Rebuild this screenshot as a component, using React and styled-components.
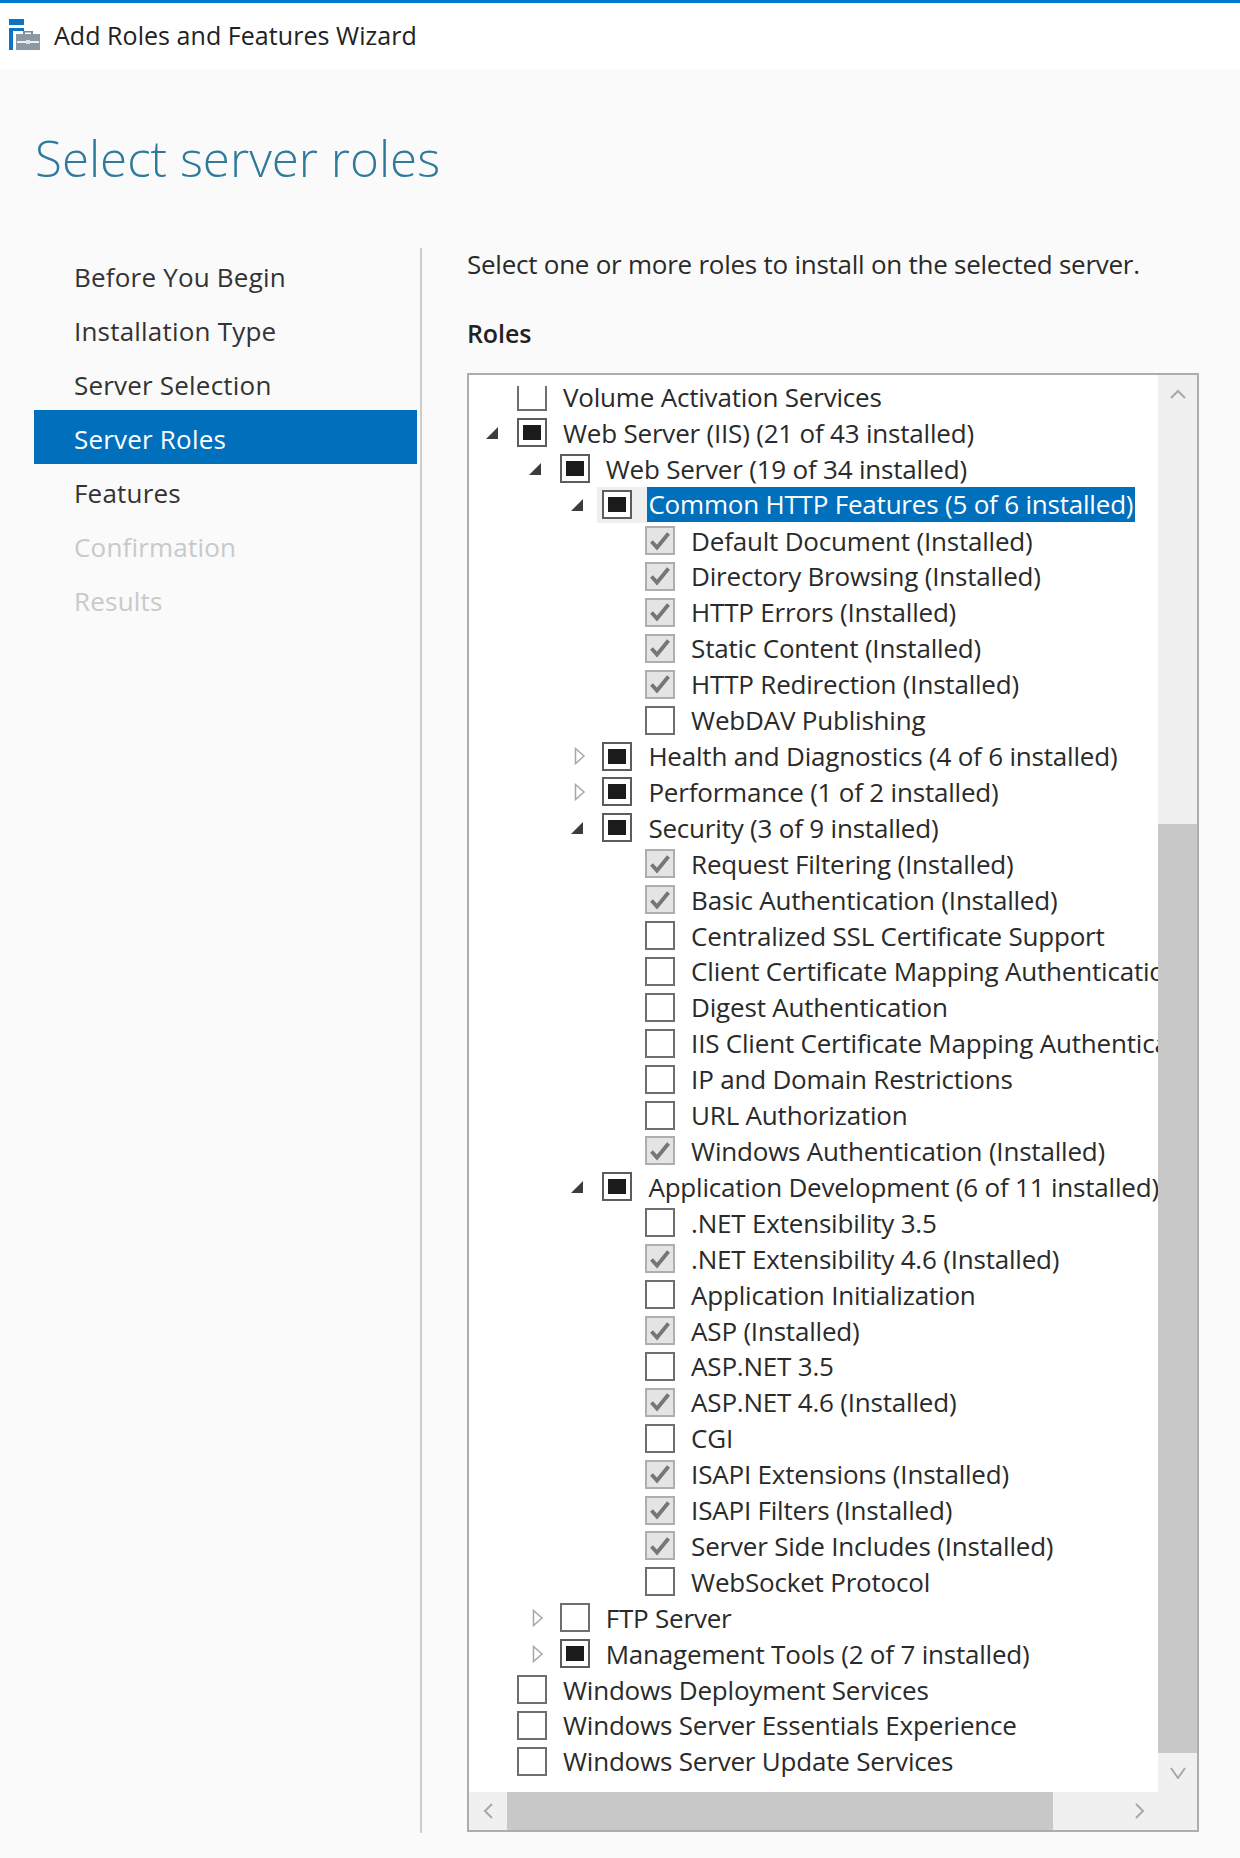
import React from 'react';
import styled, { createGlobalStyle } from 'styled-components';

const GlobalStyle = createGlobalStyle`
  html, body {
    margin: 0;
    padding: 0;
    background: #fafafa;
  }
  body {
    font-family: "Open Sans", "Noto Sans", sans-serif;
  }
`;

const Page = styled.div`
  width: 1240px;
  height: 1858px;
  overflow: hidden;
  display: flex;
  flex-direction: column;
  background: #fafafa;
`;

const TitleBar = styled.header`
  height: 70px;
  box-sizing: border-box;
  border-top: 3px solid #0078d0;
  background: #fff;
  padding: 0 0 4px 9px;
  display: flex;
  align-items: center;
  gap: 13px;
`;

const TitleText = styled.span`
  font-size: 25px;
  color: #222;
  letter-spacing: 0.05px;
`;

const Heading = styled.h1`
  margin: 0;
  height: 178px;
  box-sizing: border-box;
  padding: 50px 0 0 35px;
  font-size: 49.3px;
  line-height: 76px;
  font-weight: 300;
  color: #2d7a9c;
`;

const Body = styled.main`
  display: flex;
  padding-left: 34px;
  height: 1585px;
`;

const Nav = styled.nav`
  width: 383px;
  margin-right: 3px;
`;

const NavItem = styled.div`
  height: 54px;
  box-sizing: border-box;
  padding: 4px 0 0 40px;
  display: flex;
  align-items: center;
  font-size: 26px;
  letter-spacing: 0.2px;
  color: ${({ $active, $disabled }) => ($active ? '#fff' : $disabled ? '#c9c9c9' : '#333')};
  background: ${({ $active }) => ($active ? '#0070bd' : 'transparent')};
`;

const Divider = styled.div`
  width: 2px;
  background: #cdcdcd;
`;

const Content = styled.section`
  width: 732px;
  margin-left: 45px;
`;

const Instruction = styled.p`
  margin: -1px 0 1px;
  height: 34px;
  line-height: 34px;
  font-size: 26px;
  letter-spacing: -0.25px;
  color: #2a2a2a;
`;

const SectionLabel = styled.h2`
  margin: 35px 0 23px;
  height: 34px;
  line-height: 34px;
  font-size: 25px;
  font-weight: 600;
  letter-spacing: -0.1px;
  color: #222;
`;

const Panel = styled.div`
  height: 1459px;
  box-sizing: border-box;
  border: 2px solid #adadad;
  background: #fff;
  display: grid;
  grid-template-columns: 1fr 39px;
  grid-template-rows: 1fr 38px;
`;

const Viewport = styled.div`
  margin-top: 11px;
  overflow: hidden;
  min-width: 0;
`;

const Tree = styled.ul`
  list-style: none;
  margin: -7px 0 0;
  padding: 0;
`;

const Row = styled.li`
  height: 35.92px;
  box-sizing: border-box;
  padding-left: ${({ $level }) => 13 + $level * 42.7}px;
  display: flex;
  align-items: center;
  white-space: nowrap;
  font-size: 26px;
  letter-spacing: -0.2px;
  color: #2a2a2a;
`;

const Expander = styled.span`
  width: 35px;
  flex-shrink: 0;
  display: flex;
  align-items: center;
`;

const CheckCell = styled.span`
  height: 36px;
  display: flex;
  align-items: center;
  flex-shrink: 0;
  padding-right: 16px;
  ${({ $hot }) => $hot && 'background: #efefef; margin-left: -5px; padding-left: 5px;'}
`;

const boxColors = {
  empty: { border: '#6e6e6e', fill: '#fff' },
  partial: { border: '#5c5c5c', fill: '#fff' },
  checked: { border: '#aeaeae', fill: '#e4e4e4' },
};

const Box = styled.span`
  width: 30px;
  height: 29px;
  box-sizing: border-box;
  border: 2px solid ${({ $state }) => boxColors[$state].border};
  background: ${({ $state }) => boxColors[$state].fill};
  display: flex;
  align-items: center;
  justify-content: center;
`;

const PartialMark = styled.span`
  width: 18px;
  height: 15px;
  background: #1b1b1b;
`;

const Label = styled.span`
  ${({ $selected }) =>
    $selected &&
    'height: 35px; line-height: 35px; margin-left: -1px; padding: 0 2px 0 1px; background: #0070bd; color: #fff;'}
`;

const VScroll = styled.div`
  background: #f0f0f0;
  display: flex;
  flex-direction: column;
`;

const HScroll = styled.div`
  background: #f0f0f0;
  display: flex;
  min-width: 0;
`;

const Corner = styled.div`
  background: #f0f0f0;
`;

const ScrollButton = styled.div`
  flex: 0 0 ${({ $size }) => $size}px;
  display: flex;
  align-items: center;
  justify-content: center;
`;

const Thumb = styled.div`
  background: #c8c8c8;
  flex: 0 0 ${({ $size }) => $size}px;
`;

const Spacer = styled.div`
  flex: ${({ $size }) => ($size ? `0 0 ${$size}px` : 1)};
`;

const items = [
  [0, 'empty', null, 'Volume Activation Services'],
  [0, 'partial', 'open', 'Web Server (IIS) (21 of 43 installed)'],
  [1, 'partial', 'open', 'Web Server (19 of 34 installed)'],
  [2, 'partial', 'open', 'Common HTTP Features (5 of 6 installed)', true],
  [3, 'checked', null, 'Default Document (Installed)'],
  [3, 'checked', null, 'Directory Browsing (Installed)'],
  [3, 'checked', null, 'HTTP Errors (Installed)'],
  [3, 'checked', null, 'Static Content (Installed)'],
  [3, 'checked', null, 'HTTP Redirection (Installed)'],
  [3, 'empty', null, 'WebDAV Publishing'],
  [2, 'partial', 'closed', 'Health and Diagnostics (4 of 6 installed)'],
  [2, 'partial', 'closed', 'Performance (1 of 2 installed)'],
  [2, 'partial', 'open', 'Security (3 of 9 installed)'],
  [3, 'checked', null, 'Request Filtering (Installed)'],
  [3, 'checked', null, 'Basic Authentication (Installed)'],
  [3, 'empty', null, 'Centralized SSL Certificate Support'],
  [3, 'empty', null, 'Client Certificate Mapping Authentication'],
  [3, 'empty', null, 'Digest Authentication'],
  [3, 'empty', null, 'IIS Client Certificate Mapping Authentication'],
  [3, 'empty', null, 'IP and Domain Restrictions'],
  [3, 'empty', null, 'URL Authorization'],
  [3, 'checked', null, 'Windows Authentication (Installed)'],
  [2, 'partial', 'open', 'Application Development (6 of 11 installed)'],
  [3, 'empty', null, '.NET Extensibility 3.5'],
  [3, 'checked', null, '.NET Extensibility 4.6 (Installed)'],
  [3, 'empty', null, 'Application Initialization'],
  [3, 'checked', null, 'ASP (Installed)'],
  [3, 'empty', null, 'ASP.NET 3.5'],
  [3, 'checked', null, 'ASP.NET 4.6 (Installed)'],
  [3, 'empty', null, 'CGI'],
  [3, 'checked', null, 'ISAPI Extensions (Installed)'],
  [3, 'checked', null, 'ISAPI Filters (Installed)'],
  [3, 'checked', null, 'Server Side Includes (Installed)'],
  [3, 'empty', null, 'WebSocket Protocol'],
  [1, 'empty', 'closed', 'FTP Server'],
  [1, 'partial', 'closed', 'Management Tools (2 of 7 installed)'],
  [0, 'empty', null, 'Windows Deployment Services'],
  [0, 'empty', null, 'Windows Server Essentials Experience'],
  [0, 'empty', null, 'Windows Server Update Services'],
];

const steps = [
  { name: 'Before You Begin' },
  { name: 'Installation Type' },
  { name: 'Server Selection' },
  { name: 'Server Roles', active: true },
  { name: 'Features' },
  { name: 'Confirmation', disabled: true },
  { name: 'Results', disabled: true },
];

const WizardIcon = () => (
  <svg width="32" height="32" viewBox="0 0 32 32" style={{ flexShrink: 0 }}>
    <rect x="0" y="0" width="15" height="6" fill="#0f73c4" />
    <path d="M0 9h15v3H4v19H0z" fill="#0f73c4" />
    <path d="M7 15h24v16H7z" fill="#8b99a5" />
    <path d="M8 22h22v2H8z" fill="#eef1f3" />
    <path d="M14 15v-3h10v3h-2v-1.5h-6V15z" fill="#7b8a96" />
    <path d="M17 21h4v4h-4z" fill="#dfe4e8" />
  </svg>
);

const ExpanderIcon = ({ kind }) =>
  kind === 'open' ? (
    <svg width="15" height="14" viewBox="0 0 15 14" style={{ marginLeft: 3 }}>
      <path d="M13 1v12H1z" fill="#3c3c3c" />
    </svg>
  ) : (
    <svg width="12" height="18" viewBox="0 0 12 18" style={{ marginLeft: 7 }}>
      <path d="M1.5 1.5 10 9l-8.500 7.500z" fill="#fff" stroke="#a6a6a6" strokeWidth="1.500" />
    </svg>
  );

const CheckMark = () => (
  <svg width="22" height="20" viewBox="0 0 22 20">
    <path d="M2.500 10.500 8 16.500 19.500 2.500" fill="none" stroke="#767676" strokeWidth="3.800" />
  </svg>
);

const Chevron = ({ dir }) => {
  const paths = {
    up: 'M1 10 8 3l7 7',
    down: 'M1 2l7 10 7-10',
    left: 'M9 1 2 8l7 7',
    right: 'M2 1l7 7-7 7',
  };
  const flat = dir === 'up' || dir === 'down';
  return (
    <svg width={flat ? 16 : 11} height={flat ? 13 : 16} viewBox={flat ? '0 0 16 13' : '0 0 11 16'}>
      <path d={paths[dir]} fill="none" stroke="#a8a8a8" strokeWidth="2" />
    </svg>
  );
};

const App = () => (
  <Page>
    <GlobalStyle />
    <TitleBar>
      <WizardIcon />
      <TitleText>Add Roles and Features Wizard</TitleText>
    </TitleBar>
    <Heading>Select server roles</Heading>
    <Body>
      <Nav>
        {steps.map((step) => (
          <NavItem key={step.name} $active={step.active} $disabled={step.disabled}>
            {step.name}
          </NavItem>
        ))}
      </Nav>
      <Divider />
      <Content>
        <Instruction>Select one or more roles to install on the selected server.</Instruction>
        <SectionLabel>Roles</SectionLabel>
        <Panel>
          <Viewport>
            <Tree>
              {items.map(([level, state, expander, text, selected]) => (
                <Row key={text} $level={level}>
                  <Expander>{expander && <ExpanderIcon kind={expander} />}</Expander>
                  <CheckCell $hot={selected}>
                    <Box $state={state}>
                      {state === 'partial' && <PartialMark />}
                      {state === 'checked' && <CheckMark />}
                    </Box>
                  </CheckCell>
                  <Label $selected={selected}>{text}</Label>
                </Row>
              ))}
            </Tree>
          </Viewport>
          <VScroll>
            <ScrollButton $size={39}><Chevron dir="up" /></ScrollButton>
            <Spacer $size={410} />
            <Thumb $size={929} />
            <ScrollButton $size={39}><Chevron dir="down" /></ScrollButton>
          </VScroll>
          <HScroll>
            <ScrollButton $size={38}><Chevron dir="left" /></ScrollButton>
            <Thumb $size={546} />
            <Spacer />
            <ScrollButton $size={38}><Chevron dir="right" /></ScrollButton>
          </HScroll>
          <Corner />
        </Panel>
      </Content>
    </Body>
  </Page>
);

export default App;
